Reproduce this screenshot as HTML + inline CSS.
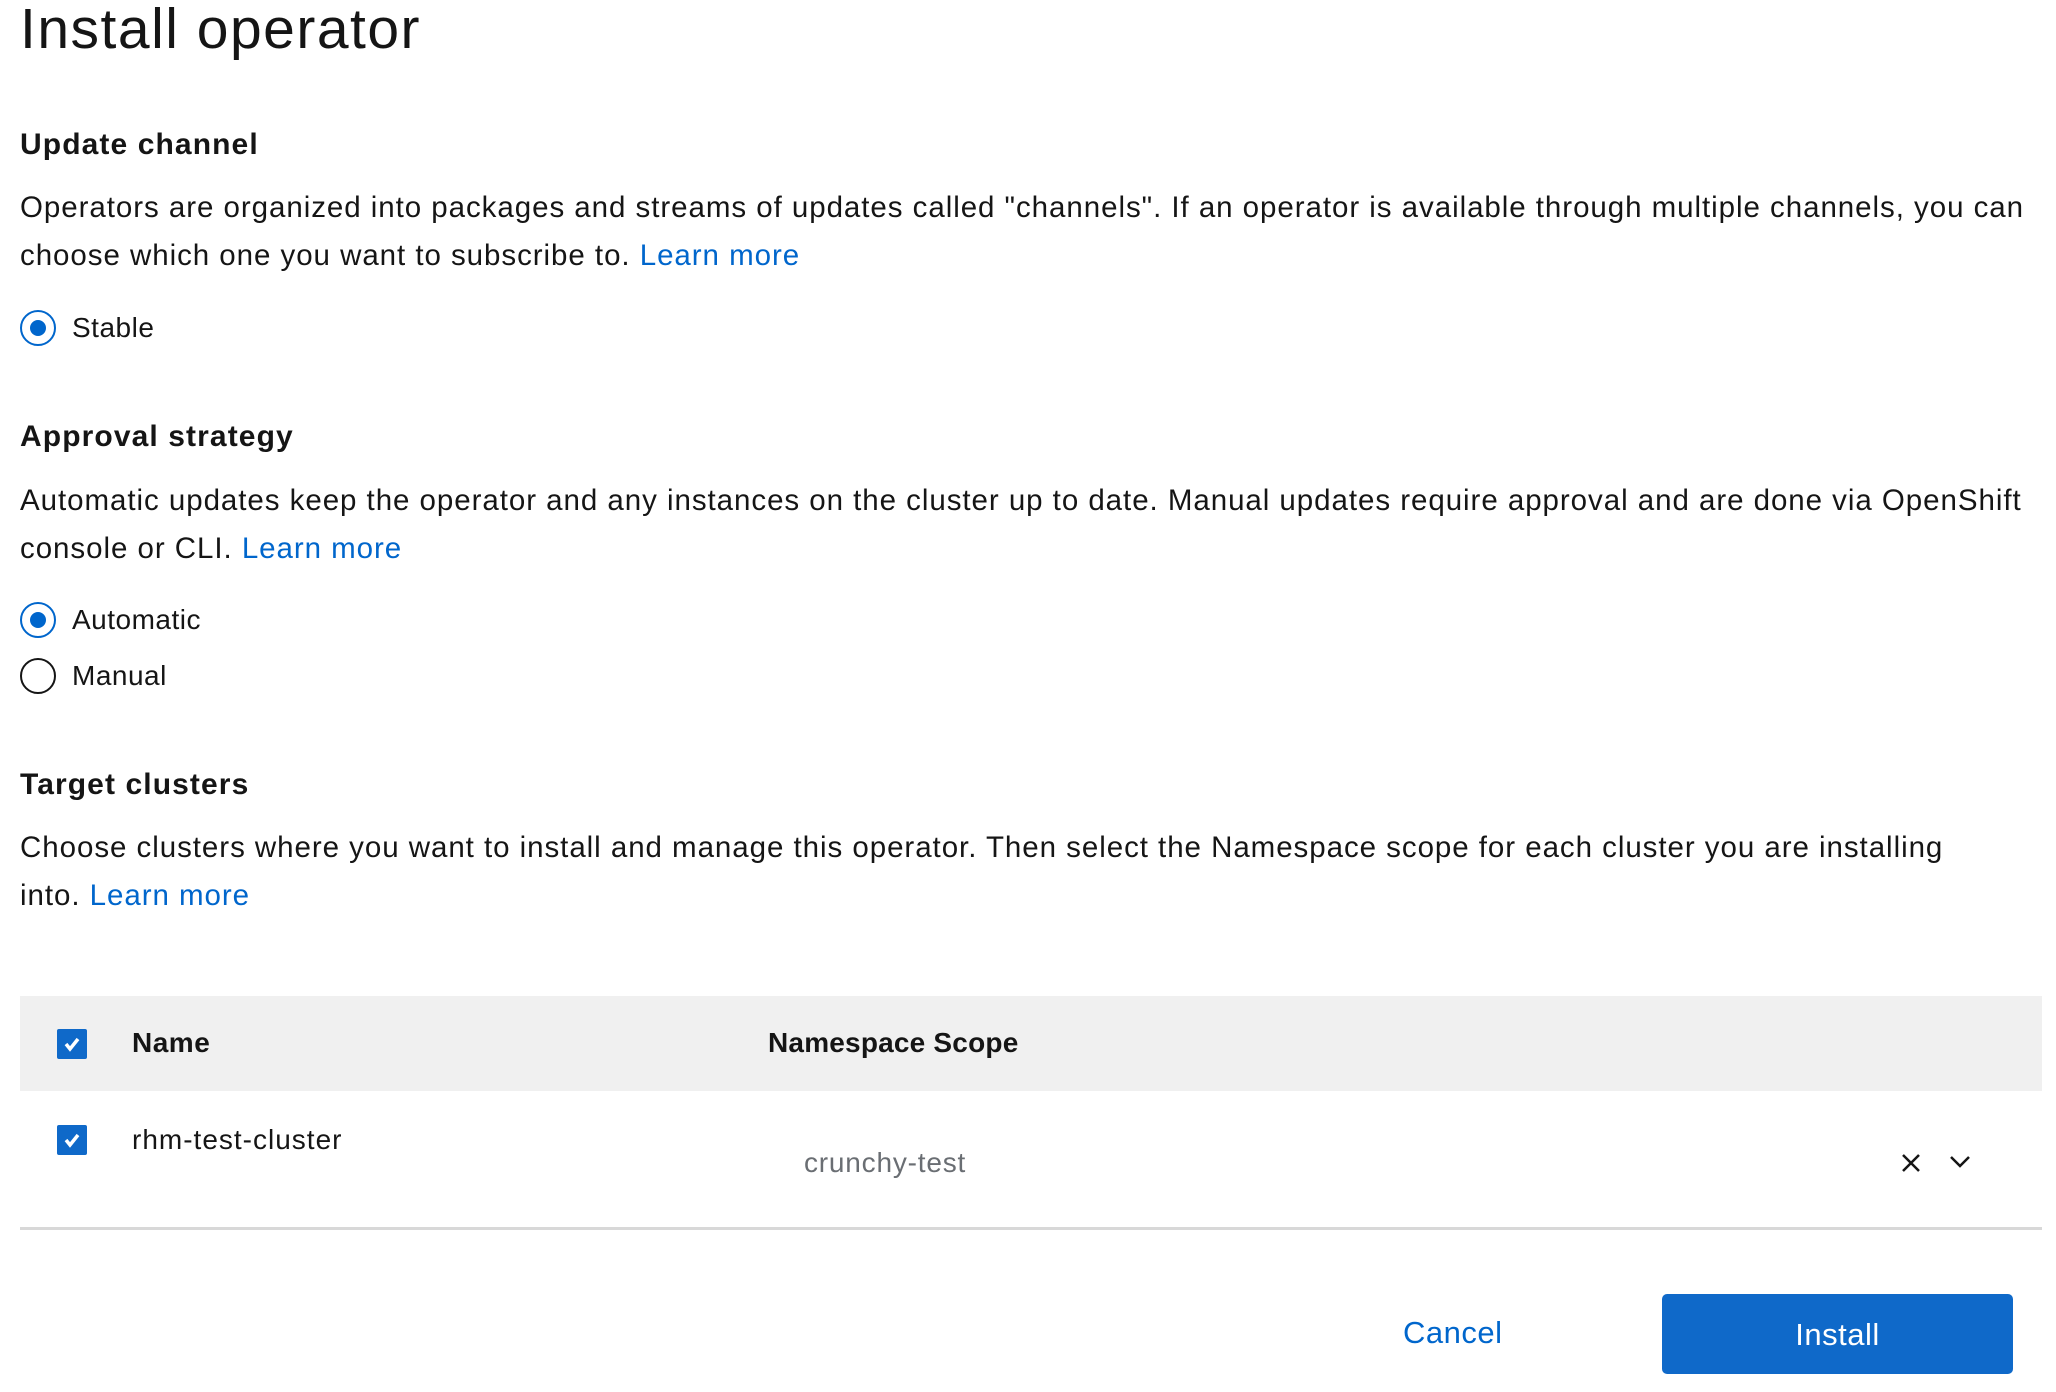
<!DOCTYPE html>
<html><head><meta charset="utf-8"><style>
*{margin:0;padding:0;box-sizing:border-box}
body{width:2056px;height:1392px;background:#fff;font-family:"Liberation Sans",sans-serif;color:#151515;position:relative;overflow:hidden}
.a{position:absolute;white-space:nowrap}
h1{position:absolute;left:20px;top:-4px;font-size:57px;font-weight:400;letter-spacing:1.5px}
.h{font-size:30px;font-weight:600;letter-spacing:1.1px}
.p{font-size:29.5px;line-height:48px;letter-spacing:0.95px}
a{color:#0066cc;text-decoration:none}
.r{position:absolute;width:36px;height:36px;border-radius:50%;border:2px solid #151515}
.r.on{border:2px solid #0066cc}
.r.on::after{content:"";position:absolute;left:8px;top:8px;width:16px;height:16px;border-radius:50%;background:#0066cc}
.lbl{font-size:28px;letter-spacing:0.5px}
.cb{position:absolute;width:30px;height:30px;background:#0f69c9;border-radius:2px}
</style></head><body>
<h1>Install operator</h1>
<div class="a h" style="left:20px;top:128px">Update channel</div>
<div class="a p" style="left:20px;top:184px">Operators are organized into packages and streams of updates called "channels". If an operator is available through multiple channels, you can<br>choose which one you want to subscribe to. <a>Learn more</a></div>
<div class="r on" style="left:20px;top:310px"></div>
<div class="a lbl" style="left:72px;top:312px">Stable</div>

<div class="a h" style="left:20px;top:420px">Approval strategy</div>
<div class="a p" style="left:20px;top:477px">Automatic updates keep the operator and any instances on the cluster up to date. Manual updates require approval and are done via OpenShift<br>console or CLI. <a>Learn more</a></div>
<div class="r on" style="left:20px;top:602px"></div>
<div class="a lbl" style="left:72px;top:604px">Automatic</div>
<div class="r" style="left:20px;top:658px"></div>
<div class="a lbl" style="left:72px;top:660px">Manual</div>

<div class="a h" style="left:20px;top:768px">Target clusters</div>
<div class="a p" style="left:20px;top:824px">Choose clusters where you want to install and manage this operator. Then select the Namespace scope for each cluster you are installing<br>into. <a>Learn more</a></div>

<div style="position:absolute;left:20px;top:996px;width:2022px;height:95px;background:#f0f0f0"></div>
<div class="cb" style="left:57px;top:1029px"><svg width="30" height="30"><path d="M9 15l4 5 8-10" stroke="#fff" stroke-width="3.5" fill="none"/></svg></div>
<div class="a" style="left:132px;top:1027px;font-size:28px;font-weight:600;letter-spacing:0.5px">Name</div>
<div class="a" style="left:768px;top:1027px;font-size:28px;font-weight:600;letter-spacing:0.2px">Namespace Scope</div>

<div class="cb" style="left:57px;top:1125px"><svg width="30" height="30"><path d="M9 15l4 5 8-10" stroke="#fff" stroke-width="3.5" fill="none"/></svg></div>
<div class="a" style="left:132px;top:1124px;font-size:28px;letter-spacing:1px">rhm-test-cluster</div>
<div class="a" style="left:804px;top:1147px;font-size:28px;color:#6a6e73;letter-spacing:0.8px">crunchy-test</div>
<svg class="a" style="left:1900px;top:1152px" width="22" height="22"><path d="M3 3l16 16M19 3L3 19" stroke="#151515" stroke-width="2.5"/></svg>
<svg class="a" style="left:1948px;top:1154px" width="24" height="16"><path d="M3 3l9 9 9-9" stroke="#151515" stroke-width="2.5" fill="none"/></svg>
<div style="position:absolute;left:20px;top:1227px;width:2022px;height:3px;background:#d8d8d8"></div>

<div class="a" style="left:1403px;top:1315px;font-size:31px;color:#0066cc;letter-spacing:0.5px">Cancel</div>
<div style="position:absolute;left:1662px;top:1294px;width:351px;height:80px;background:#0f69c9;border-radius:5px;color:#fff;font-size:31px;text-align:center;line-height:82px;letter-spacing:0.5px">Install</div>
</body></html>
